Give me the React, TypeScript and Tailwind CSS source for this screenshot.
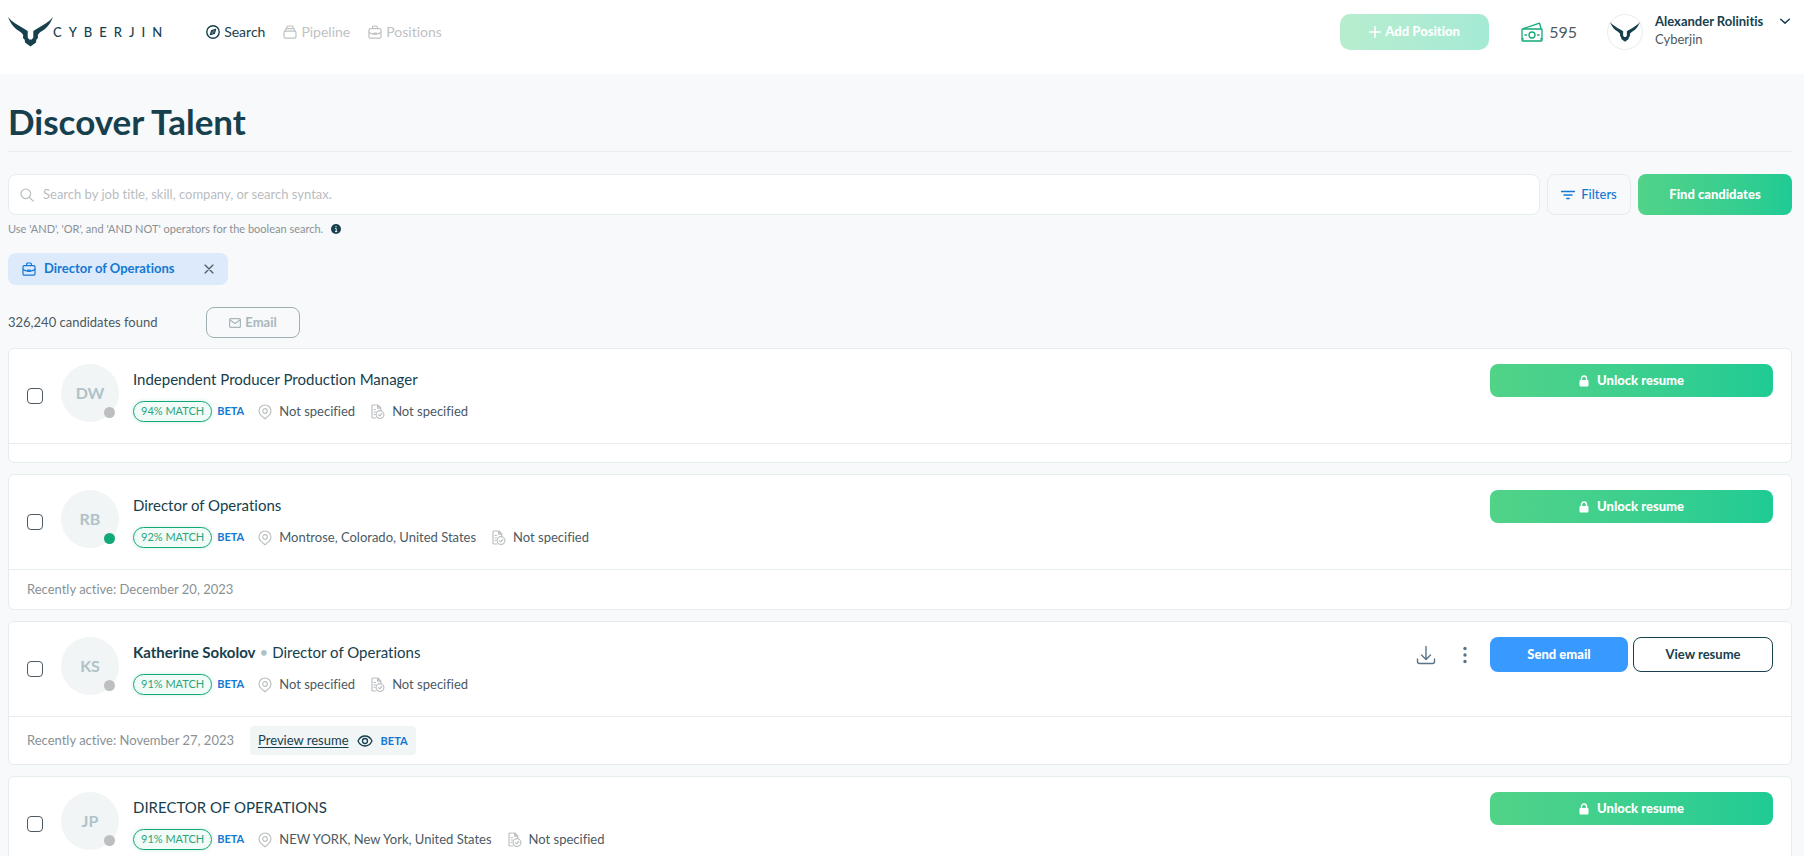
import { useState } from 'react';
import type { ReactNode } from 'react';

interface Candidate {
  id: number;
  initials: string;
  name?: string;
  title: string;
  match: number;
  location: string;
  experience: string;
  isActive: boolean;
  lastActive?: string;
  isUnlocked: boolean;
}

const candidates: Candidate[] = [
  {
    id: 1,
    initials: 'DW',
    title: 'Independent Producer Production Manager',
    match: 94,
    location: 'Not specified',
    experience: 'Not specified',
    isActive: false,
    isUnlocked: false,
  },
  {
    id: 2,
    initials: 'RB',
    title: 'Director of Operations',
    match: 92,
    location: 'Montrose, Colorado, United States',
    experience: 'Not specified',
    isActive: true,
    lastActive: 'December 20, 2023',
    isUnlocked: false,
  },
  {
    id: 3,
    initials: 'KS',
    name: 'Katherine Sokolov',
    title: 'Director of Operations',
    match: 91,
    location: 'Not specified',
    experience: 'Not specified',
    isActive: false,
    lastActive: 'November 27, 2023',
    isUnlocked: true,
  },
  {
    id: 4,
    initials: 'JP',
    title: 'DIRECTOR OF OPERATIONS',
    match: 91,
    location: 'NEW YORK, New York, United States',
    experience: 'Not specified',
    isActive: false,
    isUnlocked: false,
  },
];

interface IconProps {
  className?: string;
  viewBox?: string;
  strokeWidth?: number;
  children: ReactNode;
}

const Icon = ({ className, viewBox = '0 0 14 14', strokeWidth = 1.2, children }: IconProps) => (
  <svg
    className={className}
    viewBox={viewBox}
    fill="none"
    stroke="currentColor"
    strokeWidth={strokeWidth}
    strokeLinecap="round"
    strokeLinejoin="round"
    aria-hidden="true"
  >
    {children}
  </svg>
);

const BullLogo = ({ className }: { className?: string }) => (
  <svg className={className} viewBox="0 0 45 30" fill="currentColor" aria-hidden="true">
    <path d="M0 0C4 5 10 8 14 10.500Q17 12 19.700 14L19.700 20.500L21.200 22.500H23.800L25.300 20.500V14Q28 12 31 10.500C35 8 41 5 45 0C43 5 40.500 9 37.500 11.500C34.500 14 31.500 15 29.800 18L30 21L28.300 22.800L28 25.500L22.500 29.500L17 25.500L16.700 22.800L15 21L15.200 18C13.500 15 10.500 14 7.500 11.500C4.500 9 2 5 0 0Z" />
  </svg>
);

const CompassIcon = () => (
  <Icon className="size-3.5" strokeWidth={1.4}>
    <circle cx="7" cy="7" r="6.200" />
    <path d="M9.600 4.400L8.300 8.300L4.400 9.600L5.700 5.700Z" />
    <circle cx="7" cy="7" r="0.400" />
  </Icon>
);

const PipelineIcon = () => (
  <Icon className="size-3.5">
    <rect x="1" y="6.200" width="12" height="7" rx="1.600" />
    <path d="M2 6.200L2.600 4.400Q2.900 3.600 3.800 3.600H10.200Q11.100 3.600 11.400 4.400L12 6.200M3.600 3.400L4.200 1.600Q4.400 1 5 1H9Q9.600 1 9.800 1.600L10.400 3.400" />
  </Icon>
);

const BriefcaseIcon = ({ className }: { className: string }) => (
  <Icon className={className}>
    <rect x="1" y="3.600" width="12" height="9.600" rx="1.200" />
    <path d="M4.600 3.400V2Q4.600 1 5.600 1H8.400Q9.400 1 9.400 2V3.400M1.200 7.500Q3 9.200 5.600 8.700M8.400 8.700Q11 9.200 12.800 7.500M5.800 8H8.200V9.400H5.800Z" />
  </Icon>
);

const MoneyIcon = () => (
  <Icon className="w-5.5 h-5 text-[#12a878]" viewBox="0 0 22 20" strokeWidth={1.3}>
    <rect x="1" y="7" width="20" height="12" rx="0.800" />
    <path d="M2.500 6.500L18.500 1.200L20 6.500" />
    <circle cx="11" cy="13" r="3" />
    <path d="M4 13H5.500M16.500 13H18M1 16.800H2.500M19.500 16.800H21" />
  </Icon>
);

const PinIcon = () => (
  <Icon className="w-3.5 h-4 text-[#bcc0c2]" viewBox="0 0 14 16">
    <path d="M7 14.800L3.300 11.600C1.800 10.300 1 8.800 1 7A6 6 0 0 1 13 7C13 8.800 12.200 10.300 10.700 11.600Z" />
    <circle cx="7" cy="7" r="2.300" />
  </Icon>
);

const ExperienceIcon = () => (
  <Icon className="w-3.5 h-4 text-[#bcc0c2]" viewBox="0 0 14 16">
    <path d="M5 14H2Q1 14 1 13V2Q1 1 2 1H6.800L9.800 4V6M6.600 1.200V4.200H9.600M3 5.500H4.500M3 8H5M3 10.500H4" />
    <circle cx="9" cy="10.600" r="3.900" />
    <path d="M7.500 10.800L8.700 11.900L10.700 9.500" />
  </Icon>
);

const Header = () => (
  <header className="flex items-start justify-between bg-white h-[74px] pl-2 pr-3.5 pt-3.5">
    <div className="flex items-center h-9">
      <a href="#" className="flex items-center text-[#16404d]">
        <BullLogo className="w-[45px] h-[30px]" />
        <span className="pt-0.5 text-[13px] font-medium tracking-[7px]">CYBERJIN</span>
      </a>
      <nav className="flex items-center gap-[18px] ml-[37px] text-sm text-[#bfc1c3]">
        <a href="#" className="flex items-center gap-1 text-[#16404d]">
          <CompassIcon />
          Search
        </a>
        <a href="#" className="flex items-center gap-1">
          <PipelineIcon />
          Pipeline
        </a>
        <a href="#" className="flex items-center gap-1">
          <BriefcaseIcon className="size-3.5" />
          Positions
        </a>
      </nav>
    </div>
    <div className="flex items-center">
      <button
        disabled
        className="flex items-center justify-center gap-1 w-[149px] h-9 rounded-[10px] bg-linear-to-r from-[#b8edcf] to-[#a5ead5] text-white text-[13px] font-black"
      >
        <Icon className="size-3" strokeWidth={1.8}>
          <path d="M7 1V13M1 7H13" />
        </Icon>
        Add Position
      </button>
      <div className="flex items-center gap-1.5 ml-8 text-base text-[#4b5a63]">
        <MoneyIcon />
        595
      </div>
      <div className="flex items-center justify-center size-9 ml-7.5 rounded-full border border-[#e8eced] text-[#16404d]">
        <BullLogo className="w-[30px] h-5" />
      </div>
      <div className="self-start w-[113px] ml-3 -mt-0.5 text-[13px] leading-[18px]">
        <div className="font-bold text-[#16404d]">Alexander Rolinitis</div>
        <div className="text-[#4b5a63]">Cyberjin</div>
      </div>
      <button aria-label="Account menu" className="self-start ml-3 mt-0.5 text-[#16404d]">
        <Icon className="size-2.5" strokeWidth={2}>
          <path d="M1 4.500L7 10L13 4.500" />
        </Icon>
      </button>
    </div>
  </header>
);

const SearchBar = () => (
  <div className="flex gap-[7px] h-[41px]">
    <div className="flex flex-1 items-center rounded-lg border border-[#e6edee] bg-white pl-[11px]">
      <Icon className="size-3.5 text-[#b5babd]">
        <circle cx="5.800" cy="5.800" r="4.800" />
        <path d="M9.400 9.400L13.200 13.200" />
      </Icon>
      <input
        type="text"
        aria-label="Search candidates"
        placeholder="Search by job title, skill, company, or search syntax."
        className="flex-1 h-full px-[9px] pb-0.5 text-[13px] text-[#16404d] placeholder:text-[#b9bdbf] outline-none"
      />
    </div>
    <button className="flex items-center justify-center gap-1.5 w-[84px] rounded-lg border border-[#e6edee] text-[13px] font-medium text-[#1478d4]">
      <Icon className="size-3.5" strokeWidth={1.4}>
        <path d="M0.600 3.500H13.400M3 7H11M5.800 10.500H8.200" />
      </Icon>
      Filters
    </button>
    <button className="w-[154px] rounded-lg bg-linear-to-r from-[#51d388] to-[#1ecb94] text-[13px] font-black text-white">
      Find candidates
    </button>
  </div>
);

const MetaItem = ({ icon, children }: { icon: ReactNode; children: ReactNode }) => (
  <div className="flex items-center gap-[7px] text-[13px] text-[#4b5a63]">
    {icon}
    {children}
  </div>
);

const CandidateActions = ({ isUnlocked }: { isUnlocked: boolean }) => {
  if (!isUnlocked) {
    return (
      <button className="flex items-center justify-center gap-2 w-[283px] h-[33px] rounded-lg bg-linear-to-r from-[#51d388] to-[#1ecb94] text-[13px] font-black text-white">
        <svg className="w-2.5 h-3" viewBox="0 0 10 12" fill="none" aria-hidden="true">
          <rect x="0.500" y="5" width="9" height="6.500" rx="1" fill="currentColor" />
          <path d="M2.500 5V3.500A2.500 2.500 0 0 1 7.500 3.500V5" stroke="currentColor" strokeWidth="1.400" />
        </svg>
        Unlock resume
      </button>
    );
  }

  return (
    <div className="flex items-center self-start">
      <button aria-label="Download resume" className="text-[#577489]">
        <Icon className="size-5" viewBox="0 0 20 20" strokeWidth={1.4}>
          <path d="M10 1.500V14M5.500 10L10 14.500L14.500 10M1.500 14V16.500Q1.500 18.500 3.500 18.500H16.500Q18.500 18.500 18.500 16.500V14" />
        </Icon>
      </button>
      <button aria-label="More actions" className="ml-5 mr-4 text-[#577489]">
        <svg className="size-4.5" viewBox="0 0 18 18" fill="currentColor" aria-hidden="true">
          <circle cx="9" cy="2.500" r="1.700" />
          <circle cx="9" cy="9" r="1.700" />
          <circle cx="9" cy="15.500" r="1.700" />
        </svg>
      </button>
      <div className="flex gap-[5px] text-[13px]">
        <button className="w-[138px] h-[35px] rounded-lg bg-[#3899ff] font-black text-white">Send email</button>
        <button className="w-[140px] h-[35px] rounded-lg border border-[#16404d] font-bold text-[#16404d]">
          View resume
        </button>
      </div>
    </div>
  );
};

interface CandidateCardProps {
  candidate: Candidate;
  isSelected: boolean;
  onToggle: () => void;
}

const CandidateCard = ({ candidate, isSelected, onToggle }: CandidateCardProps) => (
  <article className="rounded-md border border-[#e6edee] bg-white">
    <div className="flex h-[94px] px-[18px] pt-[15px]">
      <input
        type="checkbox"
        checked={isSelected}
        onChange={onToggle}
        aria-label={`Select ${candidate.name ?? candidate.initials}`}
        className="appearance-none size-4 mt-6 rounded border border-[#4b5a63] bg-white checked:bg-[#16404d]"
      />
      <div className="relative flex items-center justify-center size-[58px] ml-[18px] rounded-full bg-[#f1f5f6] text-base font-bold text-[#afc2c8]">
        {candidate.initials}
        <span
          className={`absolute right-1 bottom-1 size-[11px] rounded-full ${
            candidate.isActive ? 'bg-[#12a878]' : 'bg-[#bcbec0]'
          }`}
        ></span>
      </div>
      <div className="flex-1 ml-3.5 pt-[5px]">
        <h2 className="text-[15px] leading-5 text-[#16404d]">
          {candidate.name && (
            <>
              <span className="font-bold">{candidate.name}</span>
              <span className="mx-1 text-[#afc2c8]">•</span>
            </>
          )}
          {candidate.title}
        </h2>
        <div className="flex items-center mt-3">
          <span className="h-[21px] px-[7px] rounded-full border border-[#12a878] bg-[#f1fbf7] text-[11px] leading-[17px] text-[#2ba57c] shadow-[0_0_4px_#12a87833]">
            {candidate.match}% MATCH
          </span>
          <span className="ml-[5px] mr-3.5 text-[11px] font-bold text-[#1478d4]">BETA</span>
          <div className="flex gap-4">
            <MetaItem icon={<PinIcon />}>{candidate.location}</MetaItem>
            <MetaItem icon={<ExperienceIcon />}>{candidate.experience}</MetaItem>
          </div>
        </div>
      </div>
      <CandidateActions isUnlocked={candidate.isUnlocked} />
    </div>

    {/* Activity footer */}
    <div className="border-t border-[#e6edee] px-[18px] py-[9px] text-[13px] leading-[21px] text-[#8a9194]">
      {candidate.lastActive && (
        <div className="flex items-center gap-4">
          <span>Recently active: {candidate.lastActive}</span>
          {candidate.isUnlocked && (
            <button className="flex items-center gap-2 h-[29px] px-2 rounded bg-[#f1f5f6] text-[#16404d]">
              <span className="underline underline-offset-2">Preview resume</span>
              <Icon className="w-4 h-3" viewBox="0 0 16 12" strokeWidth={1.3}>
                <path d="M1 6C2.500 2.800 5 1 8 1S13.500 2.800 15 6C13.500 9.200 11 11 8 11S2.500 9.200 1 6Z" />
                <circle cx="8" cy="6" r="2.500" />
              </Icon>
              <span className="text-[11px] font-bold text-[#1478d4]">BETA</span>
            </button>
          )}
        </div>
      )}
    </div>
  </article>
);

export default function App() {
  const [selected, setSelected] = useState<number[]>([]);

  const toggle = (id: number) => {
    setSelected((prev) => (prev.includes(id) ? prev.filter((item) => item !== id) : [...prev, id]));
  };

  return (
    <div className="h-screen overflow-hidden bg-[#f8f9fb] font-['Lato',sans-serif] [font-variant-ligatures:none]">
      <Header />
      <main className="pl-2 pr-3">
        <h1 className="pt-[27px] pb-2.5 mb-[22px] border-b border-[#e9edef] text-[35px] leading-10 font-bold text-[#16404d]">
          Discover Talent
        </h1>
        <SearchBar />
        <p className="flex items-center gap-2 mt-1.5 text-[11px] leading-4 text-[#8a9194]">
          Use 'AND', 'OR', and 'AND NOT' operators for the boolean search.
          <svg className="size-2.5" viewBox="0 0 10 10" aria-label="Search help">
            <circle cx="5" cy="5" r="5" fill="#16404d" />
            <path d="M5 2V3.200M4.200 4.500H5.200V7.500M4 7.600H6.200" stroke="#fff" strokeWidth="1" />
          </svg>
        </p>

        {/* Applied search terms */}
        <div className="flex mt-4">
          <div className="flex items-center h-8 px-3.5 rounded-lg bg-[#dceafb] text-[13px] font-bold text-[#1478d4]">
            <BriefcaseIcon className="size-3.5 mr-2" />
            Director of Operations
            <button aria-label="Remove Director of Operations" className="ml-7.5 text-[#4b5a63]">
              <Icon className="size-2.5" strokeWidth={1.8}>
                <path d="M1.500 1.500L12.500 12.500M12.500 1.500L1.500 12.500" />
              </Icon>
            </button>
          </div>
        </div>

        <div className="flex items-center mt-[22px] mb-2.5">
          <span className="w-[198px] text-[13px] text-[#4b5a63]">326,240 candidates found</span>
          <button
            disabled
            className="flex items-center justify-center gap-1 w-[94px] h-[31px] rounded-lg border border-[#9fb0b5] text-[13px] font-bold text-[#a9b7bb]"
          >
            <Icon className="w-3 h-2.5" viewBox="0 0 12 10">
              <rect x="0.600" y="0.600" width="10.800" height="8.800" rx="1" />
              <path d="M1 2L6 5.500L11 2" />
            </Icon>
            Email
          </button>
        </div>

        <div className="space-y-[11px]">
          {candidates.map((candidate) => (
            <CandidateCard
              key={candidate.id}
              candidate={candidate}
              isSelected={selected.includes(candidate.id)}
              onToggle={() => toggle(candidate.id)}
            />
          ))}
        </div>
      </main>
    </div>
  );
}
